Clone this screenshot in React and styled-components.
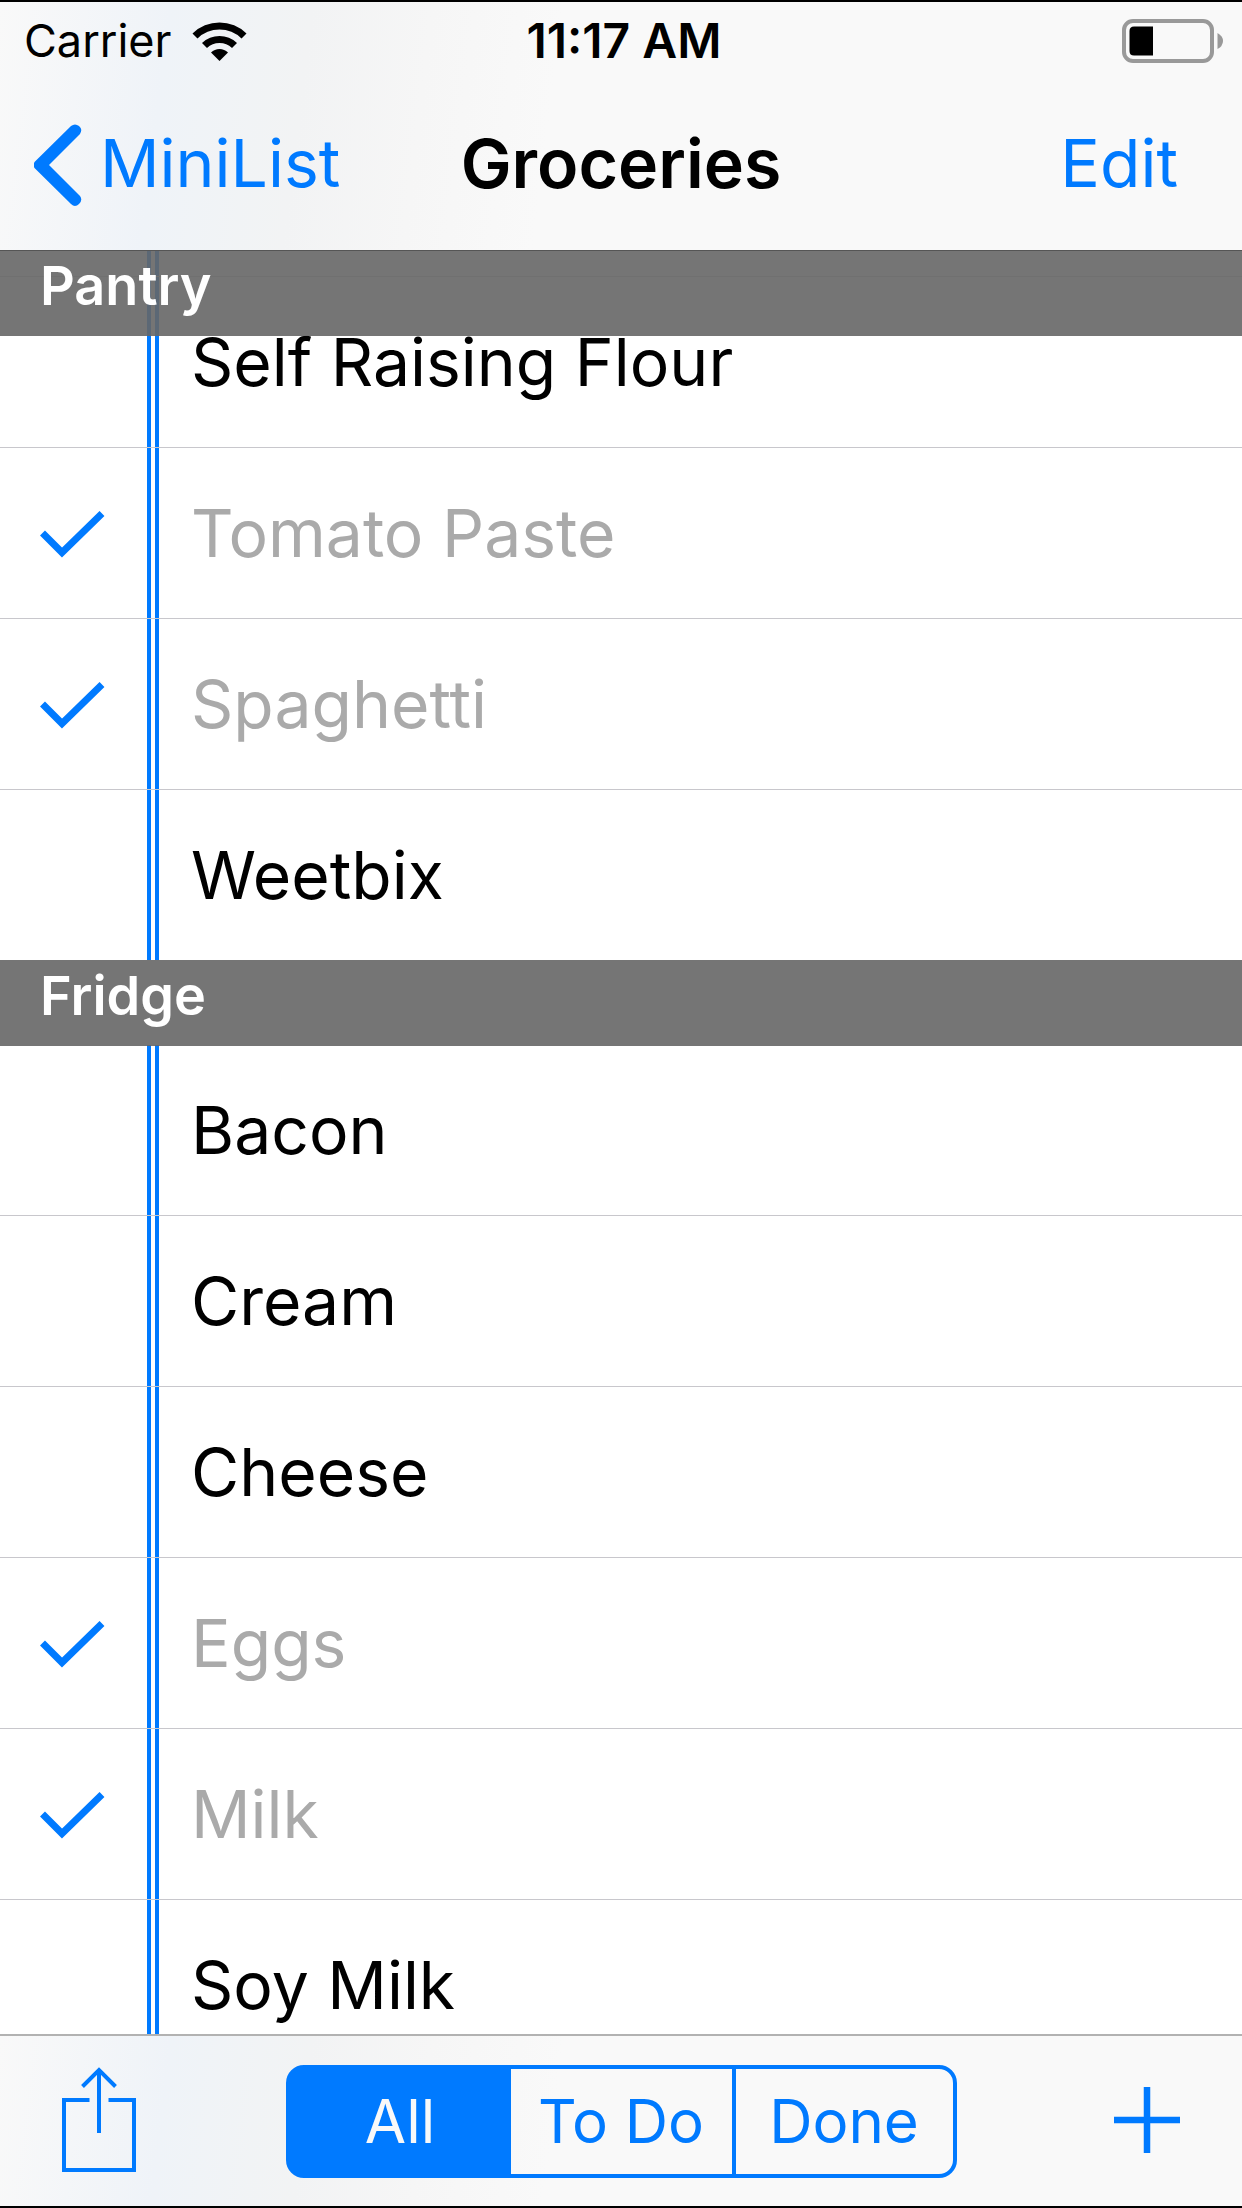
import React, { useState } from "react";
import styled, { createGlobalStyle } from "styled-components";

const blue = "#007aff";
const barTint =
  "linear-gradient(97deg, #f9f9f9 0, #eff3f8 170px, #f2f3f4 310px, #f6f6f6 430px, #f9f9f9 560px)";

const GlobalStyle = createGlobalStyle`
  *, *::before, *::after { box-sizing: border-box; }
  body {
    margin: 0;
    background: #fff;
    font-family: Inter, "Liberation Sans", sans-serif;
    color: #000;
  }
`;

const Screen = styled.div`
  display: flex;
  flex-direction: column;
  height: 100vh;
  border-top: 2px solid #000;
  border-bottom: 2px solid #000;
`;

const TopBar = styled.header`
  flex: none;
  background: ${barTint};
`;

const StatusBar = styled.div`
  display: grid;
  grid-template-columns: 1fr auto 1fr;
  align-items: center;
  height: 78px;
  padding: 0 18px 0 24px;
  font-size: 46px;
  line-height: 56px;
`;

const Carrier = styled.div`
  display: flex;
  align-items: center;
  gap: 20px;
  font-size: 45px;
`;

const WifiIcon = styled.svg`
  width: 56px;
  height: 40px;
`;

const Clock = styled.time`
  font-size: 48px;
  font-weight: 600;
`;

const BatteryIcon = styled.svg`
  justify-self: end;
  width: 102px;
  height: 44px;
`;

const NavBar = styled.nav`
  display: grid;
  grid-template-columns: 1fr auto 1fr;
  align-items: center;
  height: 170px;
  padding: 0 34px;
  font-size: 66px;
  line-height: 80px;
`;

const BackLink = styled.a`
  display: flex;
  align-items: center;
  gap: 18px;
  color: ${blue};
  text-decoration: none;
`;

const BackText = styled.span`
  padding-bottom: 4px;
`;

const BackIcon = styled.svg`
  width: 48px;
  height: 82px;
`;

const Title = styled.h1`
  margin: 0;
  padding-bottom: 4px;
  font-size: 68px;
  font-weight: 600;
`;

const TextButton = styled.button`
  justify-self: end;
  padding: 0 30px 4px;
  border: 0;
  background: none;
  color: ${blue};
  font: inherit;
  cursor: pointer;
`;

const ListArea = styled.main`
  flex: 1;
  min-height: 0;
  overflow: hidden;
`;

const SectionHeader = styled.h2`
  position: sticky;
  top: 0;
  z-index: 1;
  height: 86px;
  margin: 0 0 ${(p) => (p.$pinned ? "-86px" : "-1px")};
  padding: ${(p) => (p.$pinned ? "2px" : "3px")} 40px;
  border-top: ${(p) => (p.$pinned ? "1px solid #555" : "0")};
  background: rgba(102, 102, 102, 0.9);
  background-clip: padding-box;
  color: #fff;
  font-size: 54px;
  font-weight: 600;
  line-height: 66px;
`;

const Items = styled.ul`
  margin: 0;
  padding: 0;
  list-style: none;
`;

const Item = styled.li`
  height: ${(p) => (p.$sliver ? "27px" : p.$last ? "170px" : "171px")};
  border-bottom: ${(p) => (p.$last ? "0" : "1px solid #c8c7cc")};
`;

const ItemLabel = styled.label`
  display: grid;
  grid-template-columns: 147px 12px 1fr;
  align-items: center;
  height: 100%;
`;

const Tick = styled.span`
  display: flex;
  padding: 3px 0 0 40px;
`;

const TickBox = styled.input`
  position: absolute;
  opacity: 0;
  width: 64px;
  height: 48px;
  margin: 0;
`;

const TickIcon = styled.svg`
  width: 65px;
  height: 47px;
  visibility: ${(p) => (p.$on ? "visible" : "hidden")};
`;

const MarginRule = styled.span`
  height: 100%;
  border: solid ${blue};
  border-width: 0 4px;
`;

const ItemName = styled.span`
  padding-left: 32px;
  color: ${(p) => (p.$done ? "#aaa" : "#000")};
  font-size: 66px;
  line-height: 80px;
`;

const Toolbar = styled.footer`
  flex: none;
  display: grid;
  grid-template-columns: 1fr auto 1fr;
  align-items: center;
  height: 172px;
  padding: 0 62px;
  border-top: 2px solid #b2b2b2;
  background: ${barTint};
`;

const IconButton = styled.button`
  display: flex;
  justify-self: ${(p) => p.$side};
  padding: 0 0 3px;
  border: 0;
  background: none;
  cursor: pointer;
`;

const ShareIcon = styled.svg`
  width: 74px;
  height: 105px;
`;

const PlusIcon = styled.svg`
  width: 66px;
  height: 66px;
`;

const Segments = styled.fieldset`
  display: grid;
  grid-template-columns: repeat(3, 1fr);
  width: 671px;
  height: 113px;
  margin: 0;
  padding: 0;
  border: 4px solid ${blue};
  border-radius: 18px;
`;

const Segment = styled.label`
  display: flex;
  align-items: center;
  justify-content: center;
  border-left: ${(p) => (p.$divided ? `4px solid ${blue}` : "0")};
  background: ${(p) => (p.$on ? blue : "transparent")};
  color: ${(p) => (p.$on ? "#f9f9f9" : blue)};
  font-size: 60px;
  line-height: 72px;
  cursor: pointer;

  &:first-child {
    border-radius: 8px 0 0 8px;
  }

  &:last-child {
    border-radius: 0 8px 8px 0;
  }
`;

const SegmentRadio = styled.input`
  position: absolute;
  opacity: 0;
  margin: 0;
`;

const pantry = [
  { name: "Self Raising Flour", done: false },
  { name: "Tomato Paste", done: true },
  { name: "Spaghetti", done: true },
  { name: "Weetbix", done: false },
];

const fridge = [
  { name: "Bacon", done: false },
  { name: "Cream", done: false },
  { name: "Cheese", done: false },
  { name: "Eggs", done: true },
  { name: "Milk", done: true },
  { name: "Soy Milk", done: false },
];

const filters = ["All", "To Do", "Done"];

function GroceryItem({ name, done, last }) {
  const [checked, setChecked] = useState(done);
  return (
    <Item $last={last}>
      <ItemLabel>
        <Tick>
          <TickBox type="checkbox" checked={checked} onChange={() => setChecked(!checked)} />
          <TickIcon $on={checked} viewBox="0 0 65 47" aria-hidden="true">
            <path d="M2.5 22L22 41.5L62 2.5" fill="none" stroke={blue} strokeWidth="7" />
          </TickIcon>
        </Tick>
        <MarginRule />
        <ItemName $done={checked}>{name}</ItemName>
      </ItemLabel>
    </Item>
  );
}

function Section({ title, items, pinned }) {
  return (
    <section>
      <SectionHeader $pinned={pinned}>{title}</SectionHeader>
      <Items>
        {/* Tail of the row scrolled under the pinned header */}
        {pinned && (
          <Item $sliver aria-hidden="true">
            <ItemLabel as="div">
              <span />
              <MarginRule />
            </ItemLabel>
          </Item>
        )}
        {items.map((item, i) => (
          <GroceryItem key={item.name} {...item} last={i === items.length - 1} />
        ))}
      </Items>
    </section>
  );
}

export default function App() {
  const [filter, setFilter] = useState("All");
  return (
    <>
      <GlobalStyle />
      <Screen>
        <TopBar>
          <StatusBar>
            <Carrier>
              Carrier
              <WifiIcon viewBox="0 0 56 40" aria-label="Wi-Fi">
                <path d="M0.5 12.5A38.5 38.5 0 0 1 54.5 12.5L49.5 17.5A31.5 31.5 0 0 0 5.5 17.5Z" />
                <path d="M10 22A25.5 25.5 0 0 1 45 22L40 27A18 18 0 0 0 15 27Z" />
                <path d="M19 31.5A12 12 0 0 1 36 31.5L27.5 40Z" />
              </WifiIcon>
            </Carrier>
            <Clock>11:17 AM</Clock>
            <BatteryIcon viewBox="0 0 102 44" aria-label="Battery">
              <rect x="2" y="2" width="88" height="40" rx="9" fill="none" stroke="#999" strokeWidth="4" />
              <path d="M12 7.5H31V36.5H12Q7.500 36.500 7.500 32V12Q7.500 7.500 12 7.500Z" />
              <path d="M95.5 14Q101 17 101 22T95.5 30Z" fill="#999" />
            </BatteryIcon>
          </StatusBar>
          <NavBar>
            <BackLink href="#minilist">
              <BackIcon viewBox="0 0 48 82" aria-hidden="true">
                <path
                  d="M0.5 38L37 2Q41 -1 45 2T46 10L15 41L46 72Q49 76 45 80T37 80L0.5 44Q-1 41 0.5 38Z"
                  fill={blue}
                />
              </BackIcon>
              <BackText>MiniList</BackText>
            </BackLink>
            <Title>Groceries</Title>
            <TextButton type="button">Edit</TextButton>
          </NavBar>
        </TopBar>
        <ListArea>
          <Section title="Pantry" items={pantry} pinned />
          <Section title="Fridge" items={fridge} />
        </ListArea>
        <Toolbar>
          <IconButton type="button" aria-label="Share" $side="start">
            <ShareIcon viewBox="0 0 74 105" fill="none" stroke={blue} strokeWidth="4">
              <path d="M27.5 33H2V103H72V33H46.5" />
              <path d="M37 66V3M20.5 19.5L37 3L53.5 19.5" />
            </ShareIcon>
          </IconButton>
          <Segments aria-label="Filter">
            {filters.map((name, i) => (
              <Segment
                key={name}
                $on={filter === name}
                $divided={i > 0 && filter !== name && filter !== filters[i - 1]}
              >
                <SegmentRadio
                  type="radio"
                  name="filter"
                  checked={filter === name}
                  onChange={() => setFilter(name)}
                />
                {name}
              </Segment>
            ))}
          </Segments>
          <IconButton type="button" aria-label="Add item" $side="end">
            <PlusIcon viewBox="0 0 66 66" stroke={blue} strokeWidth="6.5">
              <path d="M33 0V66M0 33H66" />
            </PlusIcon>
          </IconButton>
        </Toolbar>
      </Screen>
    </>
  );
}
